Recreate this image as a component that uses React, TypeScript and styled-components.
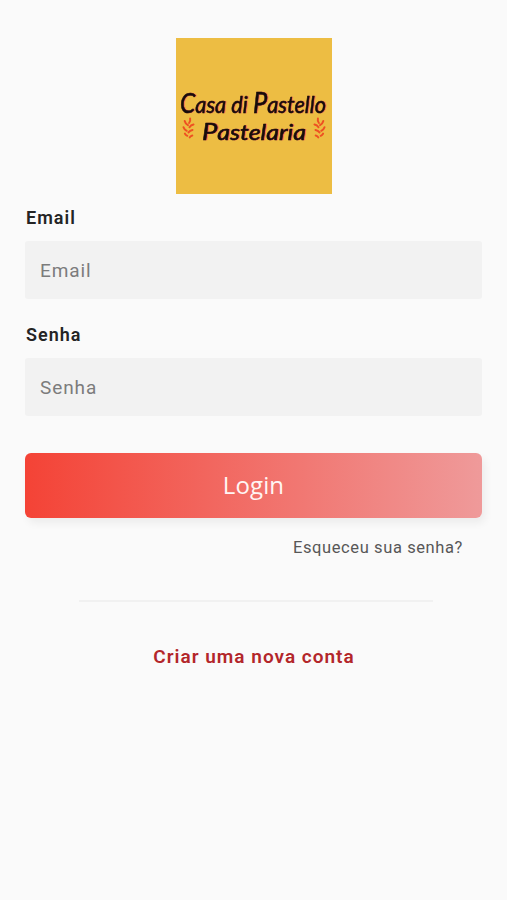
import React from "react";
import styled, { createGlobalStyle } from "styled-components";

const GlobalStyle = createGlobalStyle`
  *, *::before, *::after { box-sizing: border-box; }
  body {
    margin: 0;
    background: #fafafa;
    font-family: Roboto, "Liberation Sans", sans-serif;
  }
`;

const Screen = styled.main`
  min-height: 900px;
  padding: 38px 24px 0 25px;
  display: flex;
  flex-direction: column;
`;

const Logo = styled.svg`
  display: block;
  width: 156px;
  height: 156px;
  align-self: center;
`;

const Brand = styled.text`
  font-family: Lato, "Liberation Sans", sans-serif;
  font-style: italic;
  font-weight: 400;
  fill: #170d0b;
  stroke: #170d0b;
  stroke-width: 0.55px;
  stroke-linecap: round;
  stroke-linejoin: round;
  filter: drop-shadow(1px 0.7px 0 #f2625a);
`;

const Form = styled.form`
  display: flex;
  flex-direction: column;
`;

const Field = styled.div<{ $first?: boolean }>`
  display: flex;
  flex-direction: column;
  margin-top: ${(p) => (p.$first ? "12.5px" : "24.5px")};
`;

const Label = styled.label`
  height: 22px;
  margin: 0 0 12px 1px;
  font-size: 18px;
  line-height: 21px;
  font-weight: 600;
  letter-spacing: 1px;
  color: #242424;
`;

const Input = styled.input`
  width: 457px;
  height: 58.5px;
  padding: 1px 15px 0;
  border: 0;
  border-radius: 3px;
  outline: 0;
  background: #f2f2f2;
  font: 400 19px Roboto, "Liberation Sans", sans-serif;
  letter-spacing: 0.9px;

  &::placeholder { color: #7c7c7c; opacity: 1; }
`;

const LoginButton = styled.button`
  width: 457px;
  height: 65px;
  margin-top: 36.5px;
  padding: 0 0 2px;
  border: 0;
  border-radius: 6px;
  background: linear-gradient(90deg, #f44336, #ef9a9a);
  box-shadow: 3px 5px 9px rgba(0, 0, 0, 0.06);
  color: #fff5f4;
  font: 400 24px/63px "Open Sans", "Noto Sans", sans-serif;
  letter-spacing: 0.1px;
`;

const ForgotLink = styled.a`
  align-self: flex-end;
  margin: 19px 20px 0 0;
  font-size: 16.5px;
  line-height: 22px;
  letter-spacing: 0.6px;
  color: #575757;
`;

const Divider = styled.hr`
  width: 354px;
  height: 2px;
  margin: 41px 0 0 54px;
  border: 0;
  background: #f1f1f1;
`;

const SignUpLink = styled.a`
  align-self: center;
  margin-top: 43px;
  font-size: 19px;
  line-height: 24px;
  font-weight: 600;
  letter-spacing: 1px;
  color: #b3262a;
`;

const Leaves = () => (
  <g fill="none" stroke="#ee5022" strokeWidth="2" strokeLinecap="round">
    <path d="M8.6 79.5Q9.2 82 7.6 84" />
    <path d="M3.2 82Q4 85 6.4 86.2" />
    <path d="M12 85.5Q9.4 86 8 88.2" />
    <path d="M2 88.2Q2.8 90.6 5.2 91.8" />
    <path d="M11 91Q8.4 91.4 7 93.4" />
    <path d="M3.4 94.6Q4 96 5.8 96.8" />
    <path d="M10.8 96.4Q9 96.8 8.2 98.4" />
  </g>
);

export default function App() {
  return (
    <>
      <GlobalStyle />
      <Screen>
        <Logo viewBox="0 0 156 156" role="img" aria-label="Casa di Pastello Pastelaria">
          <rect width="156" height="156" fill="#edbd43" />
          <Brand transform="translate(4 75) scale(.76 1)" fontSize="24" textLength="192" lengthAdjust="spacingAndGlyphs">
            <tspan fontSize="27">C</tspan>asa di <tspan fontSize="28">P</tspan>astello
          </Brand>
          <Brand x="26" y="101.5" fontSize="21" textLength="104" lengthAdjust="spacingAndGlyphs">
            <tspan fontSize="23">P</tspan>astelaria
          </Brand>
          <g transform="translate(5.5 1)"><Leaves /></g>
          <g transform="translate(150.5 1) scale(-1 1)"><Leaves /></g>
        </Logo>
        <Form onSubmit={(e) => e.preventDefault()}>
          <Field $first>
            <Label htmlFor="email">Email</Label>
            <Input id="email" type="email" placeholder="Email" />
          </Field>
          <Field>
            <Label htmlFor="password">Senha</Label>
            <Input id="password" type="password" placeholder="Senha" />
          </Field>
          <LoginButton type="submit">Login</LoginButton>
        </Form>
        <ForgotLink>Esqueceu sua senha?</ForgotLink>
        <Divider />
        <SignUpLink>Criar uma nova conta</SignUpLink>
      </Screen>
    </>
  );
}
